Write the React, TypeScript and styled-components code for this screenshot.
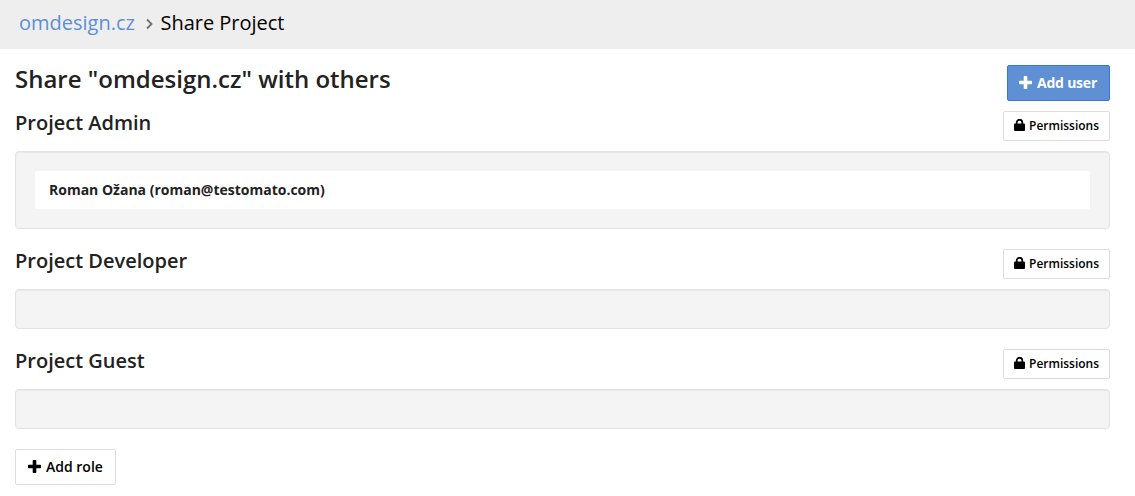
import React from 'react';
import styled, { createGlobalStyle } from 'styled-components';

const GlobalStyle = createGlobalStyle`
  * { box-sizing: border-box; }
  body {
    margin: 0;
    background: #fff;
    color: #222;
    font-family: "Open Sans", sans-serif;
    font-size: 13px;
  }
`;

const Breadcrumb = styled.nav`
  display: flex;
  align-items: center;
  height: 49px;
  padding: 0 19px 3px;
  background: #eee;
  color: #000;
  font-size: 20px;
  line-height: 28px;
`;

const CrumbLink = styled.a`
  color: #5e8fd6;
  text-decoration: none;
`;

const Separator = styled.svg`
  width: 8px;
  height: 12px;
  margin: 2px 6px 0 11.500px;
`;

const CurrentPage = styled.span`
  letter-spacing: -0.02px;
`;

const Page = styled.main`
  padding: 16px 25px 0 15px;
`;

const TitleRow = styled.div`
  display: flex;
  justify-content: space-between;
  height: 46px;
`;

const Title = styled.h1`
  margin: 0;
  font-size: 24px;
  font-weight: 600;
  line-height: 28px;
`;

const Role = styled.section`
  margin-bottom: 20px;
`;

const RoleHeader = styled.div`
  display: flex;
  justify-content: space-between;
  height: 40px;
`;

const RoleName = styled.h2`
  margin: 0;
  font-size: 20px;
  font-weight: 600;
  line-height: 24px;
`;

const Members = styled.div`
  min-height: 40px;
  padding: 19px;
  border: 1px solid #e3e3e3;
  border-radius: 4px;
  background: #f4f4f4;
  box-shadow: inset 0 1px 1px rgba(0, 0, 0, 0.05);
`;

const Member = styled.div`
  height: 38px;
  padding: 0 14px;
  border-radius: 2px;
  background: #fff;
  font-size: 14px;
  font-weight: 700;
  line-height: 38px;
`;

const Button = styled.button<{ $primary?: boolean; $small?: boolean }>`
  display: flex;
  align-items: center;
  gap: ${p => (p.$small ? 4 : 5)}px;
  width: ${p => (p.$small ? 107 : p.$primary ? 103 : 101)}px;
  height: ${p => (p.$small ? 30 : 36)}px;
  padding: 0 0 ${p => (p.$small ? 2 : 1)}px ${p => (p.$small ? 10 : p.$primary ? 11 : 12)}px;
  border: 1px solid ${p => (p.$primary ? '#3a78cb' : '#ddd')};
  border-radius: 2px;
  background: ${p => (p.$primary ? '#5e90d3' : '#fff')};
  color: ${p => (p.$primary ? '#fff' : '#000')};
  font-family: inherit;
  font-size: ${p => (p.$small ? 12 : 14)}px;
  font-weight: ${p => (p.$primary ? 700 : 600)};
  letter-spacing: ${p => (p.$primary ? -0.22 : 0)}px;
  white-space: nowrap;
`;

const PlusIcon = () => (
  <svg width="13" height="13" viewBox="0 0 13 13" fill="currentColor">
    <path d="M5.400 0h2.200a.7.700 0 0 1 .7.700v4H12.300a.7.700 0 0 1 .7.700v2.200a.7.700 0 0 1-.7.700H8.300v4a.7.700 0 0 1-.7.700H5.400a.7.700 0 0 1-.7-.700v-4H.7a.7.700 0 0 1-.7-.700V5.400a.7.700 0 0 1 .7-.700h4v-4a.7.700 0 0 1 .7-.700z" />
  </svg>
);

const LockIcon = () => (
  <svg width="11" height="12" viewBox="0 0 11 12" fill="none">
    <rect x="0" y="4.500" width="11" height="7.500" rx="1" fill="currentColor" />
    <path d="M2.700 5.500V3.500a2.800 2.700 0 0 1 5.600 0v2" stroke="currentColor" strokeWidth="1.700" />
  </svg>
);

const roles = [
  { name: 'Project Admin', members: ['Roman Ožana (roman@testomato.com)'] },
  { name: 'Project Developer', members: [] },
  { name: 'Project Guest', members: [] },
];

export default function App() {
  return (
    <>
      <GlobalStyle />
      <Breadcrumb>
        <CrumbLink>omdesign.cz</CrumbLink>
        <Separator viewBox="0 0 8 12" fill="none">
          <path d="M1 1.500 5.500 6 1 10.500" stroke="#707070" strokeWidth="1.800" />
        </Separator>
        <CurrentPage>Share Project</CurrentPage>
      </Breadcrumb>
      <Page>
        <TitleRow>
          <Title>Share "omdesign.cz" with others</Title>
          <Button $primary><PlusIcon />Add user</Button>
        </TitleRow>
        {roles.map(role => (
          <Role key={role.name}>
            <RoleHeader>
              <RoleName>{role.name}</RoleName>
              <Button $small><LockIcon />Permissions</Button>
            </RoleHeader>
            <Members>
              {role.members.map(m => <Member key={m}>{m}</Member>)}
            </Members>
          </Role>
        ))}
        <Button><PlusIcon />Add role</Button>
      </Page>
    </>
  );
}
